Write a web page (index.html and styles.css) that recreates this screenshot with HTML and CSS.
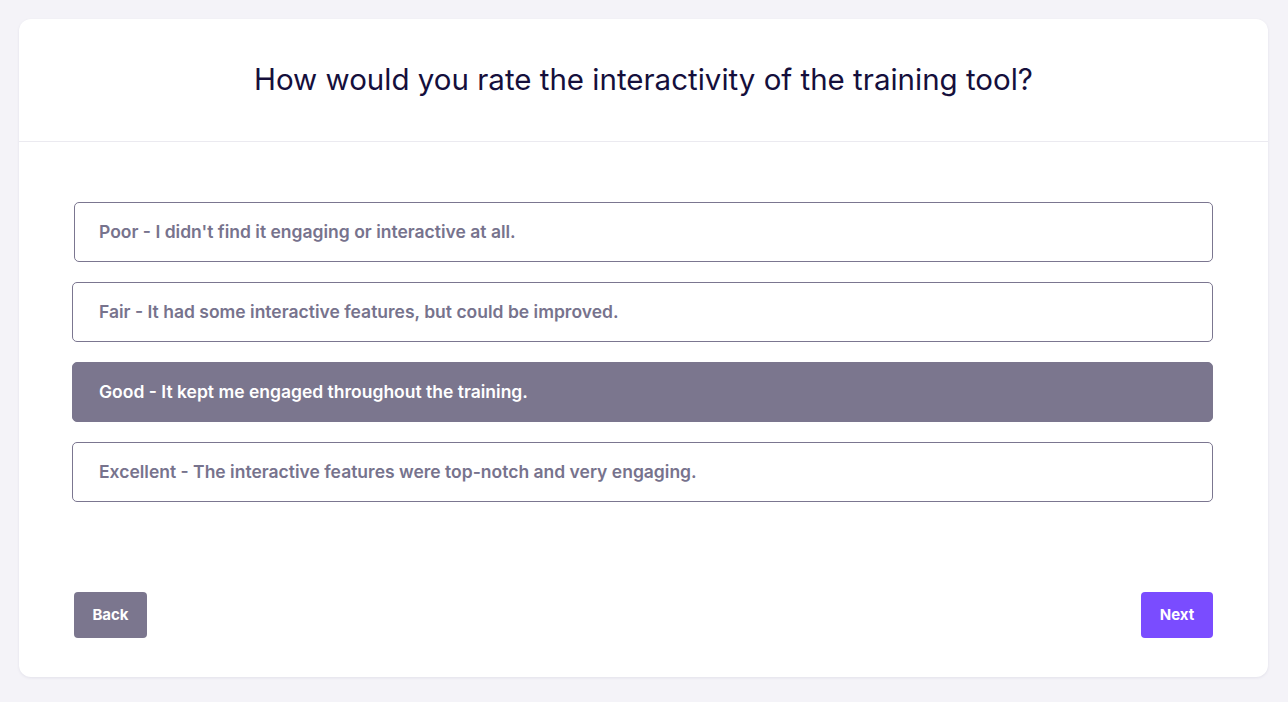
FILE: index.html
```html
<!DOCTYPE html>
<html>
<head>
<meta charset="utf-8">
<link rel="stylesheet" href="styles.css">
</head>
<body>
<div class="card">
  <div class="header">
    <h1 class="title">How would you rate the interactivity of the training tool?</h1>
  </div>
  <div class="body">
    <div class="options">
      <div class="option option-first">Poor - I didn't find it engaging or interactive at all.</div>
      <div class="option">Fair - It had some interactive features, but could be improved.</div>
      <div class="option selected">Good - It kept me engaged throughout the training.</div>
      <div class="option">Excellent - The interactive features were top-notch and very engaging.</div>
    </div>
    <div class="actions">
      <button class="btn btn-back">Back</button>
      <button class="btn btn-next">Next</button>
    </div>
  </div>
</div>
</body>
</html>
```
FILE: styles.css
```css
html, body {
  margin: 0;
  padding: 0;
}
body {
  background: #f4f3f8;
  font-family: Inter, "Noto Sans", sans-serif;
  padding: 19px 20px 25px 19px;
  box-sizing: border-box;
  height: 702px;
}
.card {
  background: #ffffff;
  border-radius: 12px;
  box-shadow: 0 1px 3px rgba(30, 20, 80, 0.08);
  height: 658px;
  display: flex;
  flex-direction: column;
}
.header {
  height: 123px;
  border-bottom: 1px solid #ebeaf0;
  display: flex;
  align-items: center;
  justify-content: center;
  box-sizing: border-box;
}
.title {
  margin: 0;
  font-size: 29.5px;
  font-weight: 400;
  color: #150f3c;
  padding-bottom: 3px;
}
.body {
  padding: 60px 55px 39px 53px;
  flex: 1;
  display: flex;
  flex-direction: column;
}
.options {
  display: flex;
  flex-direction: column;
  gap: 20px;
}
.option {
  height: 60px;
  box-sizing: border-box;
  border: 1px solid #7b7690;
  border-radius: 5px;
  display: flex;
  align-items: center;
  padding-left: 26px;
  padding-bottom: 1px;
  font-size: 17.5px;
  font-weight: 600;
  color: #77738d;
}
.option-first {
  margin-left: 2px;
  padding-left: 24px;
}
.selected {
  background: #7b768e;
  border-color: #7b768e;
  color: #ffffff;
}
.actions {
  margin-top: auto;
  display: flex;
  justify-content: space-between;
  padding-left: 2px;
}
.btn {
  height: 46px;
  border: none;
  border-radius: 4px;
  color: #ffffff;
  font-family: Inter, "Noto Sans", sans-serif;
  font-size: 15px;
  font-weight: 700;
  padding: 0 0 2px 0;
  width: 73px;
}
.btn-back {
  background: #7b768e;
}
.btn-next {
  background: #7a4cff;
  width: 72px;
}
```
